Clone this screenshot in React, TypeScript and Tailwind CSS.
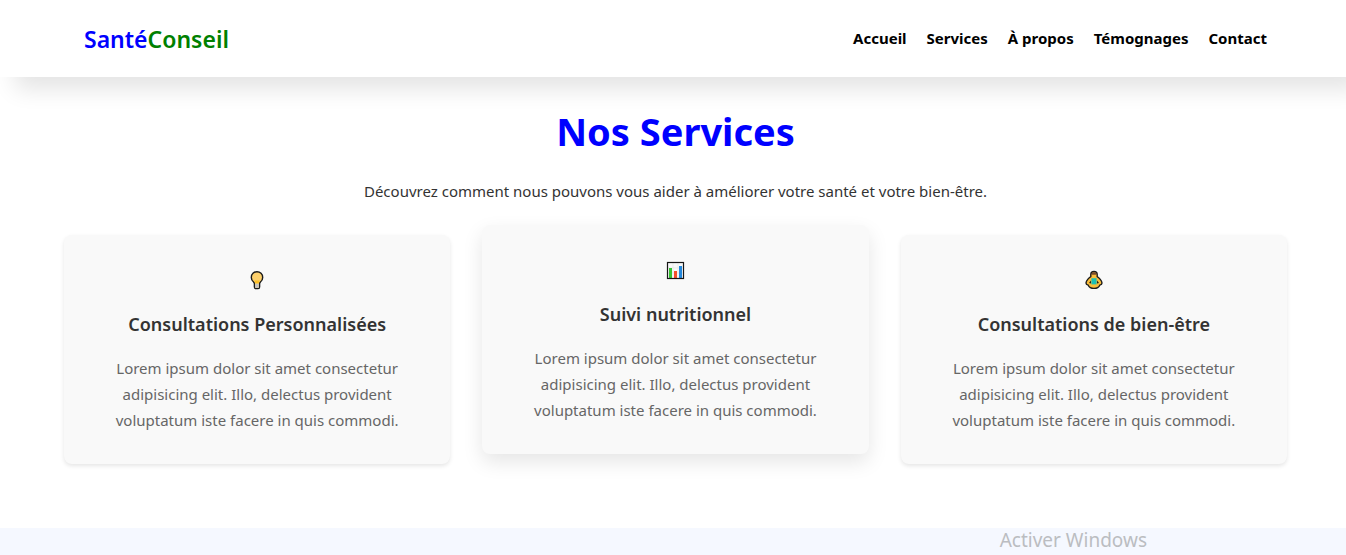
import React from "react";

const links = [
  { label: "Accueil", href: "#accueil" },
  { label: "Services", href: "#services" },
  { label: "À propos", href: "#apropos" },
  { label: "Témognages", href: "#temoignages" },
  { label: "Contact", href: "#contact" },
];

function BulbIcon() {
  return (
    <svg viewBox="0 0 20 20" className="h-5 w-5" aria-hidden="true">
      <path
        d="M10 1.7a5.7 5.7 0 0 0-5.7 5.7c0 2.5 1.3 3.8 2.3 4.7.6.5.8 1 .8 1.7v3.2c0 1 .6 1.6 1.5 1.6h2.2c.9 0 1.5-.6 1.5-1.6v-3.2c0-.7.2-1.2.8-1.7 1-.9 2.300-2.200 2.300-4.700A5.700 5.700 0 0 0 10 1.700z"
        fill="#fdd06c"
        stroke="#1c1c1c"
        strokeWidth="1.4"
      />
      <path d="M7.4 10.4h5.2L11.8 13.500H8.200z" fill="#fcbf24" />
      <path d="M8.2 13.7h3.6v4.1H8.200z" fill="#c4c4c4" />
    </svg>
  );
}

function ChartIcon() {
  return (
    <svg viewBox="0 0 20 20" className="h-5 w-5" aria-hidden="true">
      <rect x="2.5" y="2.5" width="16" height="16" fill="#f9f9f9" />
      <path d="M8 3v15M13 3v15M3 8h15M3 13h15" stroke="#e2e2e2" strokeWidth="0.6" />
      <rect x="4" y="8" width="3" height="10" fill="#36c432" />
      <rect x="9" y="11" width="3" height="7" fill="#f4502c" />
      <rect x="14" y="6" width="3" height="12" fill="#2488dc" />
      <rect x="2.5" y="2.5" width="16" height="16" fill="none" stroke="#161616" strokeWidth="1.2" />
    </svg>
  );
}

function LotusIcon() {
  return (
    <svg viewBox="0 0 20 20" className="h-5 w-5" aria-hidden="true">
      <path
        d="M10 1.500c-2 0-3.200 1.100-3.200 2.900v2.200C5 7.500 2 10.900 2 13c0 1.200.8 1.800 2.200 2.200.8 1.900 2.600 3.200 5.800 3.200s5-1.300 5.800-3.200C17.200 14.800 18 14.200 18 13c0-2.100-3-5.500-4.800-6.400V4.400c0-1.800-1.200-2.900-3.200-2.900z"
        fill="#f9bd3a"
        stroke="#1c1c1c"
        strokeWidth="1.4"
      />
      <path d="M7.500 4.800V4c0-1.100.9-1.800 2.500-1.800s2.500.7 2.500 1.800v.8z" fill="#7a4a2a" />
      <path d="M7.400 8.200h5.200v6.200H7.400z" fill="#1cc0b4" />
      <path d="M5 13l2-2.600v3.200zM15 13l-2-2.600v3.200z" fill="#1c1c1c" />
    </svg>
  );
}

const services = [
  { title: "Consultations Personnalisées", icon: <BulbIcon />, active: false },
  { title: "Suivi nutritionnel", icon: <ChartIcon />, active: true },
  { title: "Consultations de bien-être", icon: <LotusIcon />, active: false },
];

export default function App() {
  return (
    <div className="bg-white font-['Segoe_UI','Noto_Sans',sans-serif] text-[#333]">
      {/* Header */}
      <header className="bg-white pr-[59px] pl-16 shadow-[15px_12px_22px_rgba(0,0,0,0.11)]">
        <div className="flex items-center justify-between px-5 pt-[21px] pb-5">
          <a href="#accueil" className="text-[23px] leading-9 font-semibold text-[blue]">
            Santé<span className="text-[green]">Conseil</span>
          </a>
          <nav className="pb-0.5">
            <ul className="flex gap-5">
              {links.map((link) => (
                <li key={link.href}>
                  <a href={link.href} className="text-[15px] font-bold text-black">
                    {link.label}
                  </a>
                </li>
              ))}
            </ul>
          </nav>
        </div>
      </header>

      <main>
        {/* Services */}
        <section id="services" className="pt-6 pr-[59px] pb-16 pl-16 text-center">
          <h1 className="text-[38px] leading-15 font-bold text-[blue]">Nos Services</h1>
          <p className="mt-[17px] text-[15px] leading-[26px]">
            Découvrez comment nous pouvons vous aider à améliorer votre santé et votre bien-être.
          </p>

          <div className="mt-[31px] grid grid-cols-3 gap-8">
            {services.map((service) => (
              <article
                key={service.title}
                className={
                  service.active
                    ? "-translate-y-2.5 rounded-lg bg-[#f9f9f9] px-8 pt-8 pb-[31px] shadow-[0_8px_20px_rgba(0,0,0,0.1)]"
                    : "rounded-lg bg-[#f9f9f9] px-8 pt-8 pb-[31px] shadow-[0_2px_4px_rgba(0,0,0,0.1)]"
                }
              >
                <div className="flex h-[26px] items-center justify-center">{service.icon}</div>
                <h2 className="mt-4 text-lg leading-[30px] font-semibold">{service.title}</h2>
                <p className="mx-auto mt-4 max-w-[300px] text-[15px] leading-[26px] text-[#666]">
                  Lorem ipsum dolor sit amet consectetur adipisicing elit. Illo, delectus provident
                  voluptatum iste facere in quis commodi.
                </p>
              </article>
            ))}
          </div>
        </section>

        {/* Next section */}
        <section className="flex justify-end bg-[#f5f8ff] pr-[199px] pb-[3px]">
          <p className="text-[19px] leading-6 text-[#bbbdc1]">Activer Windows</p>
        </section>
      </main>
    </div>
  );
}
